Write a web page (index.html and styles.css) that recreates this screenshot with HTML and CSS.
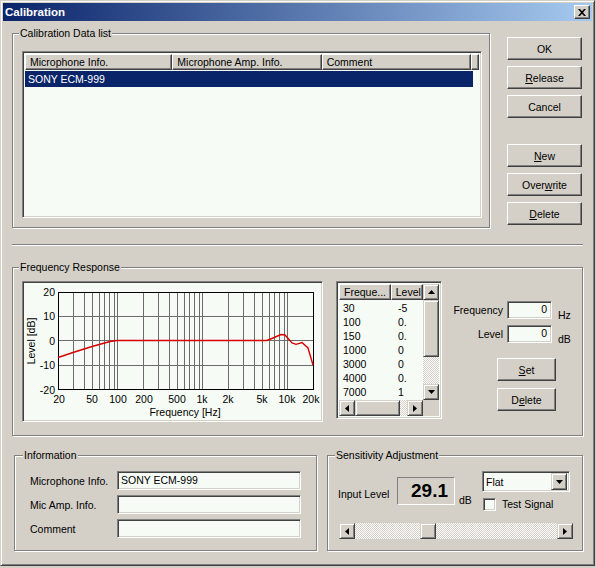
FILE: index.html
```html
<!DOCTYPE html>
<html>

<head>
    <title>Calibration</title>
    <link rel="stylesheet" href="styles.css">
</head>

<body>
<div class="window">
    <div class="titlebar">
        <span class="title">Calibration</span>
        <span class="close">
            <svg width="8" height="7" viewBox="0 0 8 7"><path d="M0 0h2l2 2.3 2-2.3h2L5 3.5 8 7H6L4 4.7 2 7H0l3-3.5z"/></svg>
        </span>
    </div>

    <div class="client">
        <div class="top">
            <fieldset class="group data-group">
                <legend>Calibration Data list</legend>
                <div class="data-body">
                    <div class="listview sunken">
                        <div class="lv-header">
                            <div class="hcell c1">Microphone Info.</div>
                            <div class="hcell c2">Microphone Amp. Info.</div>
                            <div class="hcell c3">Comment</div>
                            <div class="hcell c4"></div>
                        </div>
                        <div class="lv-row selected">SONY ECM-999</div>
                    </div>
                </div>
            </fieldset>

            <div class="side-buttons">
                <button class="btn">OK</button>
                <button class="btn"><u>R</u>elease</button>
                <button class="btn">Cancel</button>
                <button class="btn gap"><u>N</u>ew</button>
                <button class="btn">Over<u>w</u>rite</button>
                <button class="btn"><u>D</u>elete</button>
            </div>
        </div>

        <div class="separator"></div>

        <fieldset class="group freq-group">
            <legend>Frequency Response</legend>
            <div class="freq-body">
                <div class="graph sunken">
                    <svg width="297" height="137" viewBox="0 0 297 137">
                        <g class="grid">
                            <path d="M49.5 9V106M60.5 9V106M68.5 9V106M75.5 9V106M80.5 9V106M85.5 9V106M90.5 9V106M93.5 9V106
                                     M119.5 9V106M134.5 9V106M145.5 9V106M153.5 9V106M160.5 9V106M165.5 9V106M170.5 9V106M175.5 9V106M178.5 9V106
                                     M204.5 9V106M219.5 9V106M230.5 9V106M238.5 9V106M245.5 9V106M250.5 9V106M255.5 9V106M260.5 9V106M263.5 9V106
                                     M34 33.5H289M34 57.5H289M34 82.5H289"/>
                        </g>
                        <rect class="frame" x="34.5" y="9.5" width="255" height="97"/>
                        <path class="curve" d="M34 74.5L49 69.5L68 63.5L86 58.5L93 57.5L243 57.5L249 55L257 51.5L261 52L268 60L272 61.3L278 59.5L284 65L289 82"/>
                        <g class="ylab">
                            <text x="31" y="13">20</text>
                            <text x="31" y="37">10</text>
                            <text x="31" y="62">0</text>
                            <text x="31" y="86">-10</text>
                            <text x="31" y="111">-20</text>
                        </g>
                        <g class="xlab">
                            <text x="35" y="120">20</text>
                            <text x="68" y="120">50</text>
                            <text x="94" y="120">100</text>
                            <text x="120" y="120">200</text>
                            <text x="153" y="120">500</text>
                            <text x="178" y="120">1k</text>
                            <text x="204" y="120">2k</text>
                            <text x="238" y="120">5k</text>
                            <text x="263" y="120">10k</text>
                            <text x="287" y="120">20k</text>
                            <text x="161" y="133">Frequency [Hz]</text>
                        </g>
                        <text class="axis-y" x="7" y="58" transform="rotate(-90 7 58)">Level [dB]</text>
                    </svg>
                </div>

                <div class="freq-list sunken">
                    <div class="fl-main">
                        <div class="fl-header">
                            <div class="hcell fc1">Freque...</div>
                            <div class="hcell fc2">Level</div>
                        </div>
                        <div class="fl-row"><span class="fc1">30</span><span class="fc2">-5</span></div>
                        <div class="fl-row"><span class="fc1">100</span><span class="fc2">0.</span></div>
                        <div class="fl-row"><span class="fc1">150</span><span class="fc2">0.</span></div>
                        <div class="fl-row"><span class="fc1">1000</span><span class="fc2">0</span></div>
                        <div class="fl-row"><span class="fc1">3000</span><span class="fc2">0</span></div>
                        <div class="fl-row"><span class="fc1">4000</span><span class="fc2">0.</span></div>
                        <div class="fl-row"><span class="fc1">7000</span><span class="fc2">1</span></div>
                        <div class="fl-row"><span class="fc1">10000</span><span class="fc2">2</span></div>
                    </div>
                    <div class="vscroll">
                        <span class="sb-btn"><svg width="7" height="4"><polygon points="3.5,0 7,4 0,4"/></svg></span>
                        <span class="sb-thumb v-thumb"></span>
                        <span class="sb-track"></span>
                        <span class="sb-btn"><svg width="7" height="4"><polygon points="0,0 7,0 3.5,4"/></svg></span>
                    </div>
                    <div class="hscroll">
                        <span class="sb-btn"><svg width="4" height="7"><polygon points="4,0 4,7 0,3.5"/></svg></span>
                        <span class="sb-thumb h-thumb"></span>
                        <span class="sb-track"></span>
                        <span class="sb-btn"><svg width="4" height="7"><polygon points="0,0 4,3.5 0,7"/></svg></span>
                    </div>
                    <div class="corner"></div>
                </div>

                <div class="freq-edit">
                    <div class="edit-row">
                        <span class="edit-label">Frequency</span>
                        <span class="field num">0</span>
                        <span class="unit">Hz</span>
                    </div>
                    <div class="edit-row">
                        <span class="edit-label">Level</span>
                        <span class="field num">0</span>
                        <span class="unit">dB</span>
                    </div>
                    <button class="btn small set"><u>S</u>et</button>
                    <button class="btn small">D<u>e</u>lete</button>
                </div>
            </div>
        </fieldset>

        <div class="bottom">
            <fieldset class="group info-group">
                <legend>Information</legend>
                <div class="info-body">
                    <span class="info-label">Microphone Info.</span>
                    <span class="field text">SONY ECM-999</span>
                    <span class="info-label">Mic Amp. Info.</span>
                    <span class="field text"></span>
                    <span class="info-label">Comment</span>
                    <span class="field text"></span>
                </div>
            </fieldset>

            <fieldset class="group sens-group">
                <legend>Sensitivity Adjustment</legend>
                <div class="sens-body">
                    <div class="sens-top">
                        <span class="sens-label">Input Level</span>
                        <div class="readout">29.1</div>
                        <span class="sens-unit">dB</span>
                        <div class="sens-right">
                            <div class="field combo">
                                <span class="combo-text">Flat</span>
                                <span class="sb-btn drop"><svg width="7" height="4"><polygon points="0,0 7,0 3.5,4"/></svg></span>
                            </div>
                            <div class="check">
                                <span class="field box"></span>
                                <span>Test Signal</span>
                            </div>
                        </div>
                    </div>
                    <div class="slider">
                        <span class="sb-btn"><svg width="4" height="7"><polygon points="4,0 4,7 0,3.5"/></svg></span>
                        <span class="sb-track left-track"></span>
                        <span class="sb-thumb s-thumb"></span>
                        <span class="sb-track"></span>
                        <span class="sb-btn"><svg width="4" height="7"><polygon points="0,0 4,3.5 0,7"/></svg></span>
                    </div>
                </div>
            </fieldset>
        </div>
    </div>
</div>
</body>

</html>
```

FILE: styles.css
```css
body {
    margin: 0;
    background: #d4d0c8;
    font-family: "Liberation Sans", Arial, sans-serif;
    font-size: 10.5px;
    color: #000;
}

.window {
    width: 595px;
    height: 566px;
    box-sizing: border-box;
    padding: 2px;
    background: #d4d0c8;
    border: 1px solid;
    border-color: #d4d0c8 #404040 #404040 #d4d0c8;
    box-shadow: inset 1px 1px #fff, inset -1px -1px #808080;
}

.titlebar {
    height: 18px;
    display: flex;
    align-items: center;
    justify-content: space-between;
    padding: 0 2px 0 2px;
    background: linear-gradient(to right, #0a246a, #a6caf0);
}

.title {
    color: #fff;
    font-weight: bold;
    font-size: 11.5px;
}

.close {
    box-sizing: border-box;
    width: 16px;
    height: 14px;
    display: flex;
    align-items: center;
    justify-content: center;
    background: #d4d0c8;
    border: 1px solid;
    border-color: #fff #404040 #404040 #fff;
    box-shadow: inset -1px -1px #808080;
}

.client {
    padding: 0 9px;
}

/* shared win classic bits */
.sunken {
    box-sizing: border-box;
    border: 1px solid;
    border-color: #808080 #fff #fff #808080;
    box-shadow: inset 1px 1px #404040, inset -1px -1px #d4d0c8;
    background: #f7fbf5;
}

.field {
    box-sizing: border-box;
    display: block;
    border: 1px solid;
    border-color: #808080 #fff #fff #808080;
    box-shadow: inset 1px 1px #404040, inset -1px -1px #d4d0c8;
    background: #f7fbf5;
}

.btn {
    box-sizing: border-box;
    display: block;
    width: 75px;
    height: 23px;
    padding: 0;
    font: inherit;
    color: #000;
    background: #d4d0c8;
    border: 1px solid;
    border-color: #fff #404040 #404040 #fff;
    box-shadow: inset -1px -1px #808080;
}

.btn u {
    text-underline-offset: 1px;
}

.hcell {
    box-sizing: border-box;
    height: 16px;
    line-height: 14px;
    padding-left: 4px;
    white-space: nowrap;
    overflow: hidden;
    background: #d4d0c8;
    border: 1px solid;
    border-color: #fff #404040 #404040 #fff;
    box-shadow: inset -1px -1px #808080;
}

.sb-btn {
    box-sizing: border-box;
    width: 16px;
    height: 16px;
    flex: none;
    display: flex;
    align-items: center;
    justify-content: center;
    background: #d4d0c8;
    border: 1px solid;
    border-color: #d4d0c8 #404040 #404040 #d4d0c8;
    box-shadow: inset 1px 1px #fff, inset -1px -1px #808080;
}

.sb-thumb {
    box-sizing: border-box;
    flex: none;
    background: #d4d0c8;
    border: 1px solid;
    border-color: #d4d0c8 #404040 #404040 #d4d0c8;
    box-shadow: inset 1px 1px #fff, inset -1px -1px #808080;
}

.sb-track {
    flex: 1;
    background: repeating-conic-gradient(#fff 0 25%, #d4d0c8 0 50%) 0 0 / 2px 2px;
}

/* group boxes */
.group {
    box-sizing: border-box;
    margin: 0;
    padding: 0;
    min-width: 0;
    border: 1px solid #808080;
    box-shadow: inset 1px 1px #fff, 1px 1px #fff;
}

.group legend {
    padding: 0 1px;
    margin-left: 6px;
    line-height: 13px;
    background: #d4d0c8;
}

/* top part */
.top {
    display: flex;
    align-items: flex-start;
}

.data-group {
    width: 478px;
    margin-top: 6px;
}

.data-body {
    padding: 11px 7px 9px 9px;
}

.listview {
    width: 460px;
    height: 167px;
    padding: 2px;
}

.lv-header {
    display: flex;
}

.c1 { width: 148px; }
.c2 { width: 150px; }
.c3 { width: 150px; }
.c4 { width: 8px; }

.lv-row {
    width: 448px;
    height: 16px;
    line-height: 16px;
    margin-top: 1px;
    padding-left: 3px;
    box-sizing: border-box;
}

.lv-row.selected {
    background: #0a246a;
    color: #fff;
}

.side-buttons {
    margin: 16px 0 0 17px;
    display: flex;
    flex-direction: column;
    gap: 6px;
}

.side-buttons .gap {
    margin-top: 20px;
}

.separator {
    width: 571px;
    margin-top: 16px;
    border-top: 1px solid #808080;
    border-bottom: 1px solid #fff;
}

/* frequency response */
.freq-group {
    width: 571px;
    margin-top: 15px;
}

.freq-body {
    display: flex;
    align-items: flex-start;
    padding: 7px 0 13px 9px;
}

.graph {
    width: 301px;
    height: 141px;
    padding: 1px;
}

.graph svg {
    display: block;
    font-family: "Liberation Sans", Arial, sans-serif;
    font-size: 10.5px;
}

.grid path {
    stroke: #6c6c6c;
    stroke-width: 1;
    fill: none;
    shape-rendering: crispEdges;
}

.frame {
    fill: none;
    stroke: #000;
    shape-rendering: crispEdges;
}

.curve {
    fill: none;
    stroke: #d80000;
    stroke-width: 1.4;
}

.ylab text {
    text-anchor: end;
}

.xlab text,
.axis-y {
    text-anchor: middle;
}

.axis-y {
    dominant-baseline: central;
}

.freq-list {
    width: 106px;
    height: 138px;
    margin-left: 13px;
    padding: 2px;
    display: grid;
    grid-template-columns: 1fr 16px;
    grid-template-rows: 1fr 16px;
}

.fl-main {
    overflow: hidden;
}

.fl-header {
    display: flex;
}

.fl-header .fc1 { width: 53px; }
.fl-header .fc2 { width: 33px; padding-left: 4px; }

.fl-row {
    display: flex;
    height: 14px;
    line-height: 14px;
}

.fl-row:nth-child(2) {
    margin-top: 1px;
}

.fl-row .fc1 {
    width: 53px;
    padding-left: 4px;
    box-sizing: border-box;
}

.fl-row .fc2 {
    padding-left: 6px;
}

.vscroll {
    display: flex;
    flex-direction: column;
}

.v-thumb {
    height: 57px;
}

.hscroll {
    display: flex;
}

.h-thumb {
    width: 45px;
}

.corner {
    background: #d4d0c8;
}

.freq-edit {
    display: flex;
    flex-direction: column;
    padding-top: 20px;
}

.edit-row {
    display: flex;
    align-items: flex-end;
    height: 18px;
    margin-bottom: 6px;
}

.edit-label {
    width: 61px;
    text-align: right;
    align-self: center;
}

.field.num {
    width: 45px;
    height: 18px;
    margin-left: 4px;
    padding-right: 4px;
    text-align: right;
    line-height: 15px;
}

.unit {
    margin-left: 6px;
    line-height: 12px;
    margin-bottom: -2px;
}

.btn.small {
    width: 59px;
    margin-left: 55px;
    margin-top: 7px;
}

.btn.set {
    margin-top: 9px;
}

/* bottom groups */
.bottom {
    display: flex;
    align-items: flex-start;
    margin-top: 13px;
}

.info-group {
    width: 303px;
    margin-left: 2px;
}

.info-group legend {
    margin-left: 8px;
}

.info-body {
    display: grid;
    grid-template-columns: 87px 184px;
    grid-auto-rows: 19px;
    row-gap: 5px;
    align-items: center;
    padding: 9px 0 12px 15px;
}

.field.text {
    height: 19px;
    line-height: 16px;
    padding-left: 3px;
}

.sens-group {
    width: 256px;
    margin-left: 10px;
}

.sens-group legend {
    margin-left: 7px;
}

.sens-body {
    padding: 9px 0 11px 10px;
}

.sens-top {
    display: flex;
    align-items: flex-start;
}

.sens-label {
    width: 59px;
    margin-top: 17px;
    line-height: 13px;
}

.readout {
    box-sizing: border-box;
    width: 58px;
    height: 28px;
    margin-top: 6px;
    padding-right: 6px;
    text-align: right;
    font-size: 19px;
    font-weight: bold;
    line-height: 26px;
    border: 1px solid;
    border-color: #808080 #fff #fff #808080;
}

.sens-unit {
    width: 23px;
    margin: 23px 0 0 4px;
    line-height: 13px;
}

.sens-right {
    display: flex;
    flex-direction: column;
}

.combo {
    width: 88px;
    height: 21px;
    padding: 2px;
    display: flex;
    align-items: center;
    justify-content: space-between;
}

.combo-text {
    padding-left: 1px;
}

.sb-btn.drop {
    height: 17px;
}

.check {
    display: flex;
    align-items: center;
    margin-top: 6px;
    line-height: 13px;
}

.field.box {
    width: 13px;
    height: 13px;
    margin: 0 6px 0 1px;
}

.slider {
    display: flex;
    width: 234px;
    height: 16px;
    margin: 12px 0 0 1px;
}

.left-track {
    flex: none;
    width: 65px;
}

.s-thumb {
    width: 16px;
}
```
